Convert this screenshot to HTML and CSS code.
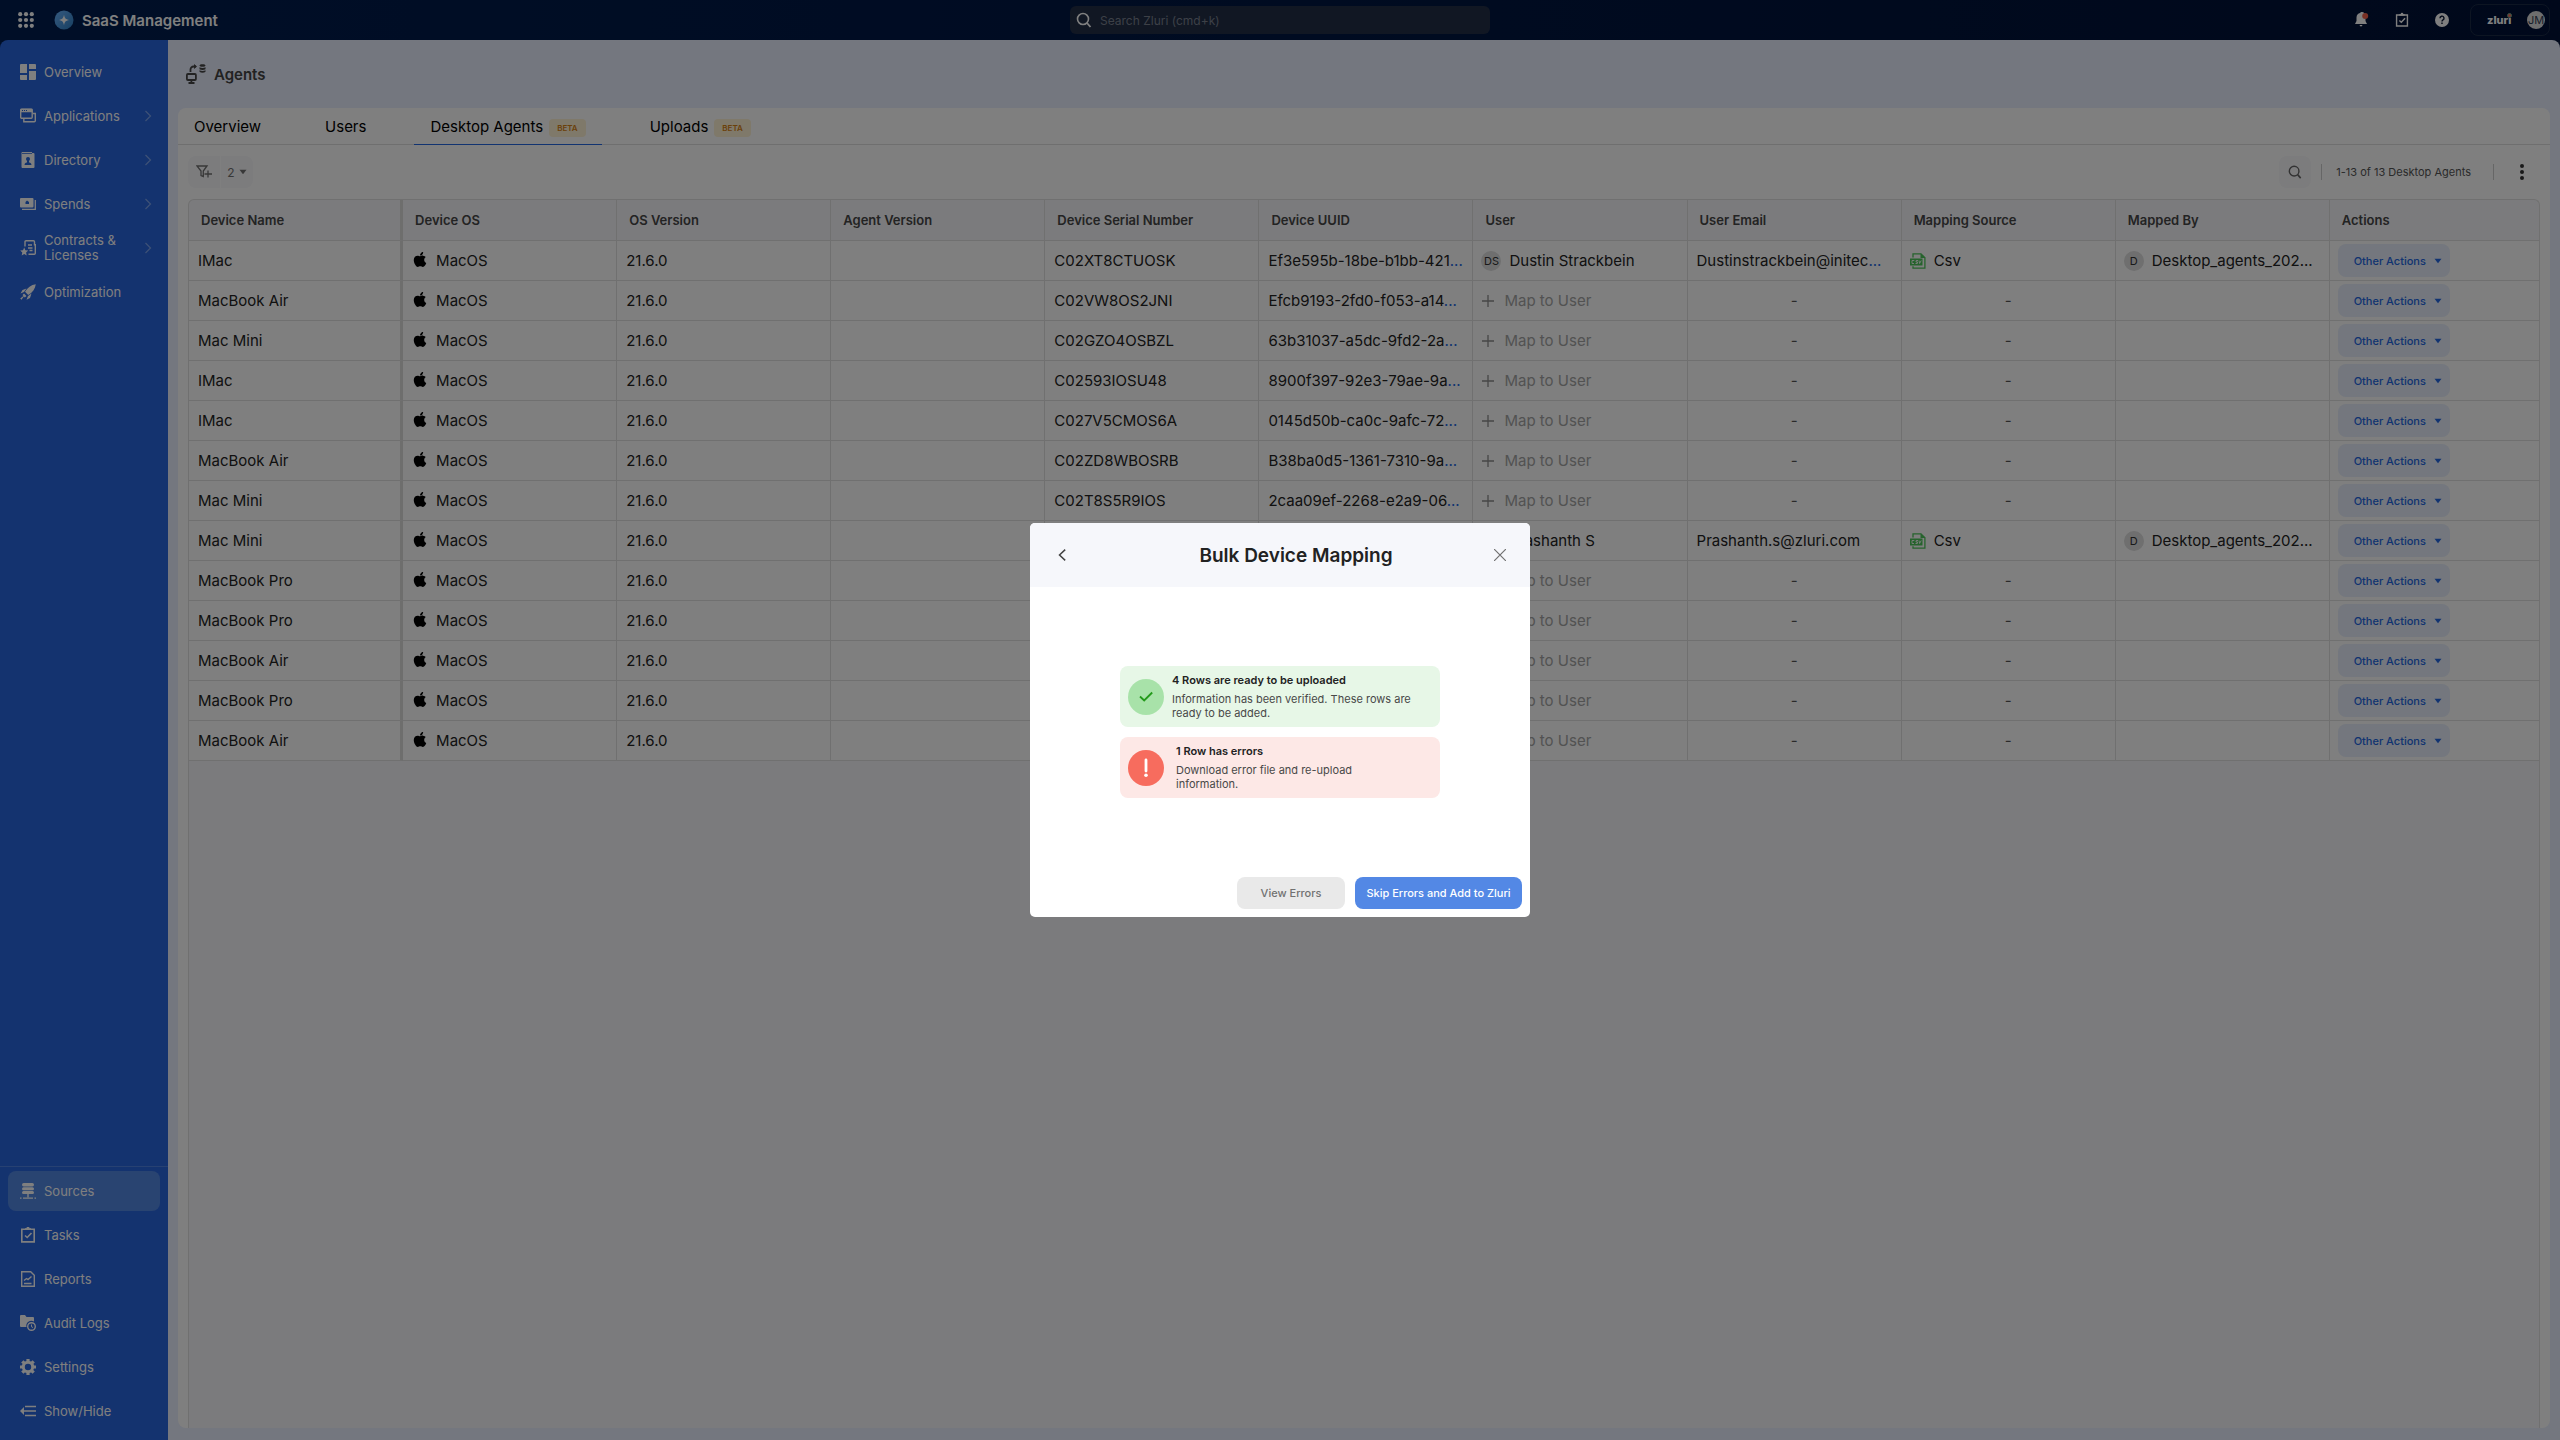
FILE: index.html
```html
<!DOCTYPE html>
<html lang="en">
<head>
<meta charset="utf-8">
<meta name="viewport" content="width=device-width, initial-scale=1">
<title>Agents - SaaS Management</title>
<link rel="stylesheet" href="styles.css">
</head>
<body>
<svg class="sprite" aria-hidden="true">
  <symbol id="apple" viewBox="0 0 384 512"><path d="M318.700 268.700c-.2-36.700 16.400-64.400 50-84.800-18.800-26.900-47.200-41.700-84.700-44.600-35.500-2.800-74.300 20.700-88.500 20.700-15 0-49.400-19.700-76.400-19.700C63.300 141.200 4 184.800 4 273.500q0 39.300 14.400 81.200c12.800 36.700 59 126.700 107.200 125.200 25.200-.6 43-17.900 75.800-17.900 31.800 0 48.300 17.900 76.400 17.900 48.600-.7 90.400-82.500 102.600-119.300-65.200-30.700-61.700-90-61.700-91.900zm-56.600-164.200c27.300-32.400 24.800-61.900 24-72.500-24.100 1.400-52 16.400-67.900 34.900-17.500 19.800-27.800 44.300-25.600 71.900 26.100 2 49.900-11.400 69.500-34.300z"/></symbol>
  <symbol id="csv" viewBox="0 0 16 16"><path d="M3 4.500V.8h8l3.900 3.900v10.500H3v-2" fill="none" stroke="#4cc75a" stroke-width="1.300"/><path d="M10.500.5 15.500 5h-5z" fill="#4cc75a"/><rect x="0" y="5.500" width="12.500" height="7" fill="#4cc75a"/><path d="M4.300 7.500H2v3h2M8 7.500H6.200L6 9h1.600l-.2 1.500H5.500M9 7.500l.6 3 1.600-3" fill="none" stroke="#fff" stroke-width=".9"/></symbol>
  <symbol id="plus" viewBox="0 0 12 12"><path d="M6 0v12M0 6h12" fill="none" stroke="currentColor" stroke-width="1.300"/></symbol>
  <symbol id="caret" viewBox="0 0 8 6"><path d="M.5.800h7L4 5.200z" fill="currentColor"/></symbol>
  <symbol id="chev" viewBox="0 0 8 12"><path d="M1.500 1 6.500 6l-5 5" fill="none" stroke="currentColor" stroke-width="1.200"/></symbol>
  <symbol id="search" viewBox="0 0 16 16"><circle cx="7" cy="7" r="5.500" fill="none" stroke="currentColor" stroke-width="1.600"/><path d="m11 11 3.500 4" stroke="currentColor" stroke-width="1.800"/></symbol>
  <symbol id="task" viewBox="0 0 16 16"><path d="M1.800 2.300h12.400v12.600H1.800z" fill="none" stroke="currentColor" stroke-width="1.600"/><path d="M5 1.200h1.500a1.500 1.500 0 0 1 3 0H11V3H5z" fill="currentColor"/><path d="m5 8.500 2.200 2L11.500 6" fill="none" stroke="currentColor" stroke-width="1.600"/></symbol>
</svg>

<header class="topbar">
  <div class="brand">
    <button class="icon-btn" aria-label="App switcher"><svg width="16" height="16" viewBox="0 0 16 16"><g fill="#fff"><circle cx="2.200" cy="2.200" r="2.100"/><circle cx="8" cy="2.200" r="2.100"/><circle cx="13.800" cy="2.200" r="2.100"/><circle cx="2.200" cy="8" r="2.100"/><circle cx="8" cy="8" r="2.100"/><circle cx="13.800" cy="8" r="2.100"/><circle cx="2.200" cy="13.800" r="2.100"/><circle cx="8" cy="13.800" r="2.100"/><circle cx="13.800" cy="13.800" r="2.100"/></g></svg></button>
    <svg class="logo" width="20" height="20" viewBox="0 0 20 20"><defs><linearGradient id="lg" x2="1" y2="1"><stop stop-color="#6bb4ff"/><stop offset="1" stop-color="#2f7fc4"/></linearGradient></defs><circle cx="10" cy="10" r="9.500" fill="url(#lg)"/><path d="M10 4.800c.8 3.700 1.500 4.400 5.200 5.200-3.700.8-4.400 1.500-5.200 5.200-.8-3.700-1.500-4.400-5.200-5.200 3.700-.8 4.400-1.500 5.200-5.200z" fill="#fff"/></svg>
    <span class="product">SaaS Management</span>
  </div>
  <label class="global-search"><svg width="16" height="16"><use href="#search"/></svg><input type="search" aria-label="Search" placeholder="Search Zluri (cmd+k)"></label>
  <div class="top-actions">
    <button class="icon-btn" aria-label="Notifications"><svg width="14" height="16" viewBox="0 0 14 16"><path d="M6 0a4 4 0 0 1 4.500 4.500V9L12 12H0l1.500-3V5.500C1.500 3 3 1.200 5 1zM4.600 13h2.800a1.400 1.400 0 0 1-2.800 0z" fill="#fff"/><circle cx="10.200" cy="4" r="3" fill="#f2604a"/></svg></button>
    <button class="icon-btn" aria-label="Tasks"><svg width="14" height="16"><use href="#task"/></svg></button>
    <button class="icon-btn" aria-label="Help"><svg width="14" height="14" viewBox="0 0 14 14"><circle cx="7" cy="7" r="7" fill="#fff"/><path d="M5 5.300a2 2 0 1 1 3 1.600c-.7.400-1 .8-1 1.500M7 9.600v1.500" fill="none" stroke="#051331" stroke-width="1.400"/></svg></button>
    <button class="account"><span class="org">zluri<i></i></span><span class="me">JM</span></button>
  </div>
</header>

<div class="shell">
  <nav class="sidebar">
    <div class="nav-group">
      <a class="nav-item" href="#"><svg width="16" height="16" viewBox="0 0 16 16"><path d="M0 1a1 1 0 0 1 1-1h6v9H0zM9 0h6a1 1 0 0 1 1 1v4H9zM9 7h7v8a1 1 0 0 1-1 1H9zM0 11h7v5H1a1 1 0 0 1-1-1z" fill="currentColor"/></svg><span>Overview</span></a>
      <a class="nav-item" href="#"><svg width="16" height="16" viewBox="0 0 16 16"><g fill="none" stroke="currentColor" stroke-width="1.400"><rect x=".7" y="1.200" width="11.500" height="9" rx="1"/><path d="M3.800 11v2.800h10.500a1 1 0 0 0 1-1V5.500H13"/></g><path d="M.5.800h12v3.400H.5z" fill="currentColor"/><path d="M2 2.500h1M4 2.500h1M6 2.500h1" stroke="#2266de"/></svg><span>Applications</span><svg class="more" width="8" height="12"><use href="#chev"/></svg></a>
      <a class="nav-item" href="#"><svg width="16" height="16" viewBox="0 0 16 16"><path d="M2 0h10v1h1.500a1 1 0 0 1 1 1v13a1 1 0 0 1-1 1h-11a1 1 0 0 1-1-1V1a1 1 0 0 1 .5-1z" fill="currentColor"/><circle cx="8" cy="7" r="2" fill="#2266de"/><path d="M4.500 13c.2-2 1.200-2.800 3.500-2.800s3.300.8 3.500 2.800zM7 8h2v3H7zM2 1h10v.8H2z" fill="#2266de"/></svg><span>Directory</span><svg class="more" width="8" height="12"><use href="#chev"/></svg></a>
      <a class="nav-item" href="#"><svg width="16" height="16" viewBox="0 0 16 16"><rect y="2" width="13.500" height="9.500" rx="1" fill="currentColor"/><path d="M15.300 4v9.300H2" fill="none" stroke="currentColor" stroke-width="1.300"/><path d="m7 4.600 2 1.400v2H5.500V6z" fill="#2266de"/></svg><span>Spends</span><svg class="more" width="8" height="12"><use href="#chev"/></svg></a>
      <a class="nav-item" href="#"><svg width="16" height="16" viewBox="0 0 16 16"><path d="M5 6.500V1.700a1 1 0 0 1 1-1h7.500a1 1 0 0 1 1 1v3h.8v8.500a1 1 0 0 1-1 1H8.500M8 5h4M8 8h4.500M9.500 10.500h3" fill="none" stroke="currentColor" stroke-width="1.400"/><path d="m4.200 7.500 1.200 2.700 2.800.3-2.100 2 .6 3.100-2.500-1.500-2.500 1.500.6-3.100-2.100-2 2.800-.3z" fill="currentColor"/></svg><span>Contracts &amp; Licenses</span><svg class="more" width="8" height="12"><use href="#chev"/></svg></a>
      <a class="nav-item" href="#"><svg width="16" height="16" viewBox="0 0 16 16"><path d="M15.800.2C11 .8 7.500 3.500 5 7.800L8.200 11C12.500 8.500 15.200 5 15.800.2zM6.500 4.500 2.500 6 .5 9.500 4 8zM11.500 9.500 8 12l-1.500 3.800L10 14zM4 9.500 6.500 12l-1.700 1.500-1-1L1.500 15.800.2 14.500l3.200-2.600-.9-.9z" fill="currentColor"/></svg><span>Optimization</span></a>
    </div>
    <div class="nav-group nav-bottom">
      <a class="nav-item active" href="#"><svg width="16" height="16" viewBox="0 0 16 16"><g fill="currentColor"><rect x="2" y="0" width="12" height="3.400" rx="1.700"/><rect x="2" y="4.200" width="12" height="3" rx="1.500"/><rect x="2" y="8" width="12" height="3" rx="1.500"/><path d="M7.300 11h1.400v3.200H7.300zM0 14.600h1.500v1.200H0zM3 14.600h10v1.200H3zM14.500 14.600H16v1.200h-1.500z"/></g></svg><span>Sources</span></a>
      <a class="nav-item" href="#"><svg width="16" height="16"><use href="#task"/></svg><span>Tasks</span></a>
      <a class="nav-item" href="#"><svg width="16" height="16" viewBox="0 0 16 16"><path d="M1.700.7h9l3.600 3.600v11H1.700zM4 12.500h7.500M4 9.500l2.500-2 1.500 1 3.500-3" fill="none" stroke="currentColor" stroke-width="1.400"/></svg><span>Reports</span></a>
      <a class="nav-item" href="#"><svg width="16" height="16" viewBox="0 0 16 16"><path d="M0 1a1 1 0 0 1 1-1h4l1.500 2H13a1 1 0 0 1 1 1v3.500A5 5 0 0 0 6.500 12H1a1 1 0 0 1-1-1z" fill="currentColor"/><circle cx="11.500" cy="11.500" r="3.800" fill="none" stroke="currentColor" stroke-width="1.400"/><path d="M11.500 9.500v2.300l1.500.7" fill="none" stroke="currentColor"/></svg><span>Audit Logs</span></a>
      <a class="nav-item" href="#"><svg width="16" height="16" viewBox="0 0 16 16"><circle cx="8" cy="8" r="4.700" fill="none" stroke="currentColor" stroke-width="3"/><g stroke="currentColor" stroke-width="3.200"><path d="M8 0v2.500M8 13.500V16M0 8h2.500M13.500 8H16M2.300 2.300l1.900 1.900M11.800 11.800l1.900 1.900M2.300 13.700l1.900-1.900M11.800 4.200l1.900-1.900"/></g></svg><span>Settings</span></a>
      <a class="nav-item" href="#"><svg width="16" height="16" viewBox="0 0 16 16"><path d="M5 3.500h11M3 8h13M5 12.500h11" stroke="currentColor" stroke-width="1.500"/><path d="M0 8l4-4v8z" fill="currentColor"/></svg><span>Show/Hide</span></a>
    </div>
  </nav>

  <main class="main">
    <div class="page-head">
      <svg width="20" height="20" viewBox="0 0 20 20"><g fill="none" stroke="#474747" stroke-width="1.800"><rect x=".9" y="10" width="9" height="6" rx="1"/><path d="M5.400 16v3M2.500 19h6M4.500 8V5.500a3 3 0 0 1 3-3H10"/></g><path d="m8 0 3 2.500L8 5zM13.500 1.500c0-1.800 6-1.800 6 0s-6 1.800-6 0zM13.500 3.300c1.500 1 4.500 1 6 0v1.900c-1.500 1-4.500 1-6 0zM13.500 6.200c1.500 1 4.500 1 6 0v1.600c-1.500 1.200-4.500 1.200-6 0z" fill="#474747"/></svg>
      <h1>Agents</h1>
    </div>
    <section class="card">
      <div class="tabs" role="tablist">
        <button class="tab" role="tab">Overview</button>
        <button class="tab" role="tab">Users</button>
        <button class="tab current" role="tab" aria-selected="true">Desktop Agents <span class="beta">BETA</span></button>
        <button class="tab" role="tab">Uploads <span class="beta">BETA</span></button>
      </div>
      <div class="toolbar">
        <div class="filters">
          <button aria-label="Add filter"><svg width="16" height="14" viewBox="0 0 16 14"><path d="M1 1h10L7.300 6v5.500l-2.300-1V6zM12 5.500v7M8.500 9H16" fill="none" stroke="currentColor" stroke-width="1.300"/></svg></button>
          <button>2 <svg width="8" height="6"><use href="#caret"/></svg></button>
        </div>
        <div class="tools">
          <button class="find" aria-label="Search agents"><svg width="14" height="14"><use href="#search"/></svg></button>
          <span class="count">1-13 of 13 Desktop Agents</span>
          <button class="icon-btn dots" aria-label="More options"><svg width="4" height="16" viewBox="0 0 4 16"><g fill="#333"><circle cx="2" cy="2" r="2"/><circle cx="2" cy="8" r="2"/><circle cx="2" cy="14" r="2"/></g></svg></button>
        </div>
      </div>
      <div class="table-wrap">
        <table>
          <thead><tr><th>Device Name</th><th>Device OS</th><th>OS Version</th><th>Agent Version</th><th>Device Serial Number</th><th>Device UUID</th><th>User</th><th>User Email</th><th>Mapping Source</th><th>Mapped By</th><th>Actions</th></tr></thead>
          <tbody>
            <tr><td>IMac</td><td class="os"><svg><use href="#apple"/></svg>MacOS</td><td>21.6.0</td><td></td><td>C02XT8CTUOSK</td><td>Ef3e595b-18be-b1bb-421<a href="#">...</a></td><td class="who"><span class="av">DS</span>Dustin Strackbein</td><td>Dustinstrackbein@initec<a href="#">...</a></td><td class="src"><svg><use href="#csv"/></svg>Csv</td><td class="who"><span class="av">D</span>Desktop_agents_202...</td><td class="act"><button>Other Actions<svg><use href="#caret"/></svg></button></td></tr>
            <tr><td>MacBook Air</td><td class="os"><svg><use href="#apple"/></svg>MacOS</td><td>21.6.0</td><td></td><td>C02VW8OS2JNI</td><td>Efcb9193-2fd0-f053-a14<a href="#">...</a></td><td class="map"><button><svg><use href="#plus"/></svg>Map to User</button></td><td class="none">-</td><td class="none">-</td><td></td><td class="act"><button>Other Actions<svg><use href="#caret"/></svg></button></td></tr>
            <tr><td>Mac Mini</td><td class="os"><svg><use href="#apple"/></svg>MacOS</td><td>21.6.0</td><td></td><td>C02GZO4OSBZL</td><td>63b31037-a5dc-9fd2-2a<a href="#">...</a></td><td class="map"><button><svg><use href="#plus"/></svg>Map to User</button></td><td class="none">-</td><td class="none">-</td><td></td><td class="act"><button>Other Actions<svg><use href="#caret"/></svg></button></td></tr>
            <tr><td>IMac</td><td class="os"><svg><use href="#apple"/></svg>MacOS</td><td>21.6.0</td><td></td><td>C02593IOSU48</td><td>8900f397-92e3-79ae-9a<a href="#">...</a></td><td class="map"><button><svg><use href="#plus"/></svg>Map to User</button></td><td class="none">-</td><td class="none">-</td><td></td><td class="act"><button>Other Actions<svg><use href="#caret"/></svg></button></td></tr>
            <tr><td>IMac</td><td class="os"><svg><use href="#apple"/></svg>MacOS</td><td>21.6.0</td><td></td><td>C027V5CMOS6A</td><td>0145d50b-ca0c-9afc-72<a href="#">...</a></td><td class="map"><button><svg><use href="#plus"/></svg>Map to User</button></td><td class="none">-</td><td class="none">-</td><td></td><td class="act"><button>Other Actions<svg><use href="#caret"/></svg></button></td></tr>
            <tr><td>MacBook Air</td><td class="os"><svg><use href="#apple"/></svg>MacOS</td><td>21.6.0</td><td></td><td>C02ZD8WBOSRB</td><td>B38ba0d5-1361-7310-9a<a href="#">...</a></td><td class="map"><button><svg><use href="#plus"/></svg>Map to User</button></td><td class="none">-</td><td class="none">-</td><td></td><td class="act"><button>Other Actions<svg><use href="#caret"/></svg></button></td></tr>
            <tr><td>Mac Mini</td><td class="os"><svg><use href="#apple"/></svg>MacOS</td><td>21.6.0</td><td></td><td>C02T8S5R9IOS</td><td>2caa09ef-2268-e2a9-06<a href="#">...</a></td><td class="map"><button><svg><use href="#plus"/></svg>Map to User</button></td><td class="none">-</td><td class="none">-</td><td></td><td class="act"><button>Other Actions<svg><use href="#caret"/></svg></button></td></tr>
            <tr><td>Mac Mini</td><td class="os"><svg><use href="#apple"/></svg>MacOS</td><td>21.6.0</td><td></td><td></td><td></td><td class="who"><span class="av">PS</span>Prashanth S</td><td>Prashanth.s@zluri.com</td><td class="src"><svg><use href="#csv"/></svg>Csv</td><td class="who"><span class="av">D</span>Desktop_agents_202...</td><td class="act"><button>Other Actions<svg><use href="#caret"/></svg></button></td></tr>
            <tr><td>MacBook Pro</td><td class="os"><svg><use href="#apple"/></svg>MacOS</td><td>21.6.0</td><td></td><td></td><td></td><td class="map"><button><svg><use href="#plus"/></svg>Map to User</button></td><td class="none">-</td><td class="none">-</td><td></td><td class="act"><button>Other Actions<svg><use href="#caret"/></svg></button></td></tr>
            <tr><td>MacBook Pro</td><td class="os"><svg><use href="#apple"/></svg>MacOS</td><td>21.6.0</td><td></td><td></td><td></td><td class="map"><button><svg><use href="#plus"/></svg>Map to User</button></td><td class="none">-</td><td class="none">-</td><td></td><td class="act"><button>Other Actions<svg><use href="#caret"/></svg></button></td></tr>
            <tr><td>MacBook Air</td><td class="os"><svg><use href="#apple"/></svg>MacOS</td><td>21.6.0</td><td></td><td></td><td></td><td class="map"><button><svg><use href="#plus"/></svg>Map to User</button></td><td class="none">-</td><td class="none">-</td><td></td><td class="act"><button>Other Actions<svg><use href="#caret"/></svg></button></td></tr>
            <tr><td>MacBook Pro</td><td class="os"><svg><use href="#apple"/></svg>MacOS</td><td>21.6.0</td><td></td><td></td><td></td><td class="map"><button><svg><use href="#plus"/></svg>Map to User</button></td><td class="none">-</td><td class="none">-</td><td></td><td class="act"><button>Other Actions<svg><use href="#caret"/></svg></button></td></tr>
            <tr><td>MacBook Air</td><td class="os"><svg><use href="#apple"/></svg>MacOS</td><td>21.6.0</td><td></td><td></td><td></td><td class="map"><button><svg><use href="#plus"/></svg>Map to User</button></td><td class="none">-</td><td class="none">-</td><td></td><td class="act"><button>Other Actions<svg><use href="#caret"/></svg></button></td></tr>
          </tbody>
        </table>
      </div>
    </section>
  </main>
</div>

<div class="overlay">
  <div class="modal" role="dialog" aria-modal="true" aria-labelledby="modal-title">
    <div class="modal-head">
      <button class="icon-btn" aria-label="Back"><svg width="8" height="12" viewBox="0 0 8 12"><path d="M7.200.6 1.500 6l5.700 5.400" fill="none" stroke="#444" stroke-width="1.500"/></svg></button>
      <h2 id="modal-title">Bulk Device Mapping</h2>
      <button class="icon-btn" aria-label="Close"><svg width="12" height="12" viewBox="0 0 12 12"><path d="m0 0 12 12M12 0 0 12" stroke="#717171" stroke-width="1.200"/></svg></button>
    </div>
    <div class="modal-body">
      <div class="notice ok">
        <svg width="36" height="36" viewBox="0 0 36 36"><circle cx="18" cy="18" r="18" fill="#a8e2a9"/><path d="m12 17.500 4.200 4 8-8" fill="none" stroke="#239a1a" stroke-width="1.800"/></svg>
        <div><h3>4 Rows are ready to be uploaded</h3><p>Information has been verified. These rows are ready to be added.</p></div>
      </div>
      <div class="notice bad">
        <svg width="36" height="36" viewBox="0 0 36 36"><circle cx="18" cy="18" r="18" fill="#f76c5e"/><path d="M18 10v11" stroke="#fff" stroke-width="2.800" stroke-linecap="round"/><circle cx="18" cy="25.200" r="1.800" fill="#fff"/></svg>
        <div><h3>1 Row has errors</h3><p>Download error file and re-upload information.</p></div>
      </div>
    </div>
    <div class="modal-foot">
      <button class="secondary">View Errors</button>
      <button class="primary">Skip Errors and Add to Zluri</button>
    </div>
  </div>
</div>
</body>
</html>
```

FILE: styles.css
```css
* { box-sizing: border-box; }
body {
  margin: 0;
  min-height: 100vh;
  display: flex;
  flex-direction: column;
  background: linear-gradient(90deg, #001d4f, #001136);
  font-family: Inter, "Liberation Sans", sans-serif;
  font-size: 15px;
  color: #222;
}
button, input { font: inherit; color: inherit; }
button { border: 0; padding: 0; background: none; cursor: pointer; }
a { text-decoration: none; }
h1, h2, h3, p { margin: 0; }
svg { display: block; flex: none; }
.sprite { position: absolute; width: 0; height: 0; }
.icon-btn { display: flex; align-items: center; justify-content: center; }

.topbar {
  height: 40px;
  display: grid;
  grid-template-columns: 1fr 420px 1fr;
  align-items: center;
  color: #fff;
}
.brand { display: flex; align-items: center; padding-left: 18px; }
.logo { margin: 0 8px 0 20px; }
.product { font-weight: 600; }
.global-search {
  height: 28px;
  display: flex;
  align-items: center;
  gap: 8px;
  padding-left: 6px;
  border-radius: 6px;
  background: #222e47;
}
.global-search input {
  flex: 1;
  border: 0;
  outline: 0;
  padding: 0;
  background: none;
  font-size: 12px;
}
.global-search input::placeholder { color: #7a818f; }
.top-actions {
  display: flex;
  justify-content: flex-end;
  align-items: center;
  gap: 26px;
  padding-right: 10px;
}
.account {
  height: 32px;
  width: 80px;
  margin-left: -5px;
  display: flex;
  align-items: center;
  justify-content: space-between;
  padding: 0 4px 0 16px;
  border: 1px solid #1b2a45;
  border-radius: 8px;
}
.org { position: relative; font-size: 11px; font-weight: 800; }
.org i {
  position: absolute;
  top: 0;
  right: -1px;
  width: 5px;
  height: 5px;
  border: 1px solid #6fae8e;
  border-radius: 50%;
  background: #f76c5e;
}
.me {
  width: 18px;
  height: 18px;
  border-radius: 50%;
  background: #ddd;
  color: #333d55;
  font-size: 11px;
  line-height: 18px;
  text-align: center;
}

.shell {
  flex: 1;
  display: flex;
  border-radius: 8px 8px 0 0;
  overflow: hidden;
}
.sidebar {
  width: 168px;
  flex: none;
  display: flex;
  flex-direction: column;
  justify-content: space-between;
  background: #2866de;
}
.nav-group {
  display: flex;
  flex-direction: column;
  gap: 4px;
  padding: 12px 8px;
}
.nav-bottom { padding: 4px 8px 9px; border-top: 1px solid #4f82e4; }
.nav-item {
  height: 40px;
  display: flex;
  align-items: center;
  gap: 8px;
  padding: 0 8px 0 12px;
  border-radius: 8px;
  color: #fff;
  font-size: 13px;
  line-height: 15px;
}
.nav-item span { flex: 1; }
.nav-item.active { background: #5388e3; }
.more { color: #7ba3ee; }

.main {
  flex: 1;
  min-width: 0;
  display: flex;
  flex-direction: column;
  padding: 0 10px 12px;
  background: #e8eefe;
}
.page-head {
  height: 68px;
  display: flex;
  align-items: center;
  gap: 8px;
  padding-left: 8px;
}
h1 { font-size: 15px; font-weight: 600; color: #444; }
.card {
  flex: 1;
  display: flex;
  flex-direction: column;
  border-radius: 8px;
  background: #fff;
}
.tabs {
  height: 37px;
  display: flex;
  gap: 32px;
  border-bottom: 1px solid #dfdfdf;
}
.tab {
  height: 37px;
  display: flex;
  align-items: center;
  gap: 6px;
  padding: 0 16px;
  border-bottom: 1px solid transparent;
  color: #000;
}
.tab.current { border-color: #2266e2; }
.beta {
  height: 18px;
  margin-top: 4px;
  padding: 0 8px;
  border-radius: 4px;
  background: #fff3d4;
  color: #d68216;
  font-size: 8px;
  font-weight: 600;
  line-height: 18px;
}
.toolbar {
  height: 54px;
  display: flex;
  align-items: center;
  justify-content: space-between;
  padding: 0 10px;
}
.filters { display: flex; gap: 1px; }
.filters button {
  width: 32px;
  height: 32px;
  display: flex;
  align-items: center;
  justify-content: center;
  gap: 4px;
  background: #f8f8fb;
  color: #717171;
  font-size: 12px;
}
.filters button:first-child { border-radius: 8px 0 0 8px; }
.filters button:last-child { border-radius: 0 8px 8px 0; }
.tools { display: flex; align-items: center; gap: 10px; }
.find {
  width: 32px;
  height: 32px;
  display: flex;
  align-items: center;
  justify-content: center;
  border-radius: 8px;
  background: #f8f8fb;
  color: #666;
}
.count {
  padding: 0 22px 0 14px;
  border: solid #ccc;
  border-width: 0 1px;
  font-size: 11px;
  line-height: 16px;
  color: #555;
}
.dots { width: 36px; }
.table-wrap {
  flex: 1;
  margin: 0 10px;
  border: solid #e0e0e0;
  border-width: 1px 1px 0;
  border-radius: 6px 6px 0 0;
  background: #f6f6fa;
  overflow: hidden;
}
table {
  width: 100%;
  table-layout: fixed;
  border-collapse: separate;
  border-spacing: 0;
}
th, td {
  height: 40px;
  padding: 0 0 0 9px;
  border: solid #e0e0e0;
  border-width: 0 1px 1px 0;
  text-align: left;
  white-space: nowrap;
  overflow: hidden;
}
th {
  height: 41px;
  width: 8.9%;
  padding-left: 12px;
  font-size: 13px;
  font-weight: 600;
  color: #474747;
}
th:not(:last-child) { width: 9.11%; }
th:first-child, td:first-child { border-right: 3px solid #dddddb; }
th:last-child, td:last-child { border-right: 0; }
td { background: #fff; }
td a { color: #2266e2; }
.os svg { display: inline-block; vertical-align: -2px; width: 16px; height: 17px; margin-right: 8px; }
.who { padding-left: 8px; }
.av {
  display: inline-block;
  width: 20px;
  height: 20px;
  margin-right: 8px;
  border-radius: 50%;
  background: #dedede;
  color: #333;
  font-size: 11px;
  line-height: 20px;
  text-align: center;
  vertical-align: 1px;
}
.src { padding-left: 8px; }
.src svg { display: inline-block; vertical-align: -3px; width: 16px; height: 16px; margin-right: 8px; }
.map button { display: flex; align-items: center; gap: 10px; color: #a5a5a5; }
.map svg { width: 12px; height: 12px; color: #8d8d8d; }
.none { padding: 0; text-align: center; color: #555; }
.act { padding-left: 8px; }
.act button {
  width: 112px;
  height: 33px;
  display: flex;
  align-items: center;
  justify-content: center;
  gap: 8px;
  padding-left: 8px;
  border-radius: 8px;
  background: #e8effc;
  color: #2266e2;
  font-size: 11px;
  font-weight: 500;
}
.act svg { width: 8px; height: 6px; }

.overlay {
  position: fixed;
  inset: 0;
  display: flex;
  align-items: center;
  justify-content: center;
  background: rgba(0, 0, 0, .5);
}
.modal {
  width: 500px;
  border-radius: 5px;
  background: #fff;
  overflow: hidden;
}
.modal-head {
  height: 64px;
  display: flex;
  align-items: center;
  justify-content: space-between;
  padding: 0 24px 0 28px;
  background: #f6f7fb;
}
h2 { padding-left: 32px; font-size: 19px; font-weight: 600; }
.modal-body {
  height: 290px;
  display: flex;
  flex-direction: column;
  align-items: center;
  justify-content: center;
  gap: 10px;
}
.notice {
  width: 320px;
  height: 61px;
  display: flex;
  align-items: center;
  gap: 8px;
  padding: 0 8px;
  border-radius: 8px;
}
.ok { background: #e7f7e7; }
.bad { gap: 12px; padding-right: 48px; background: #fde8e6; }
.notice h3 { margin-bottom: 5px; font-size: 11px; font-weight: 600; line-height: 13px; }
.notice p { font-size: 11px; line-height: 14px; color: #484848; }
.modal-foot {
  display: flex;
  justify-content: flex-end;
  gap: 10px;
  padding: 0 8px 8px;
}
.modal-foot button { height: 32px; border-radius: 8px; font-size: 11px; font-weight: 500; }
.secondary { width: 108px; background: #e9e9e9; color: #717171; }
.primary { width: 167px; background: #5388e5; color: #fff; }
```
